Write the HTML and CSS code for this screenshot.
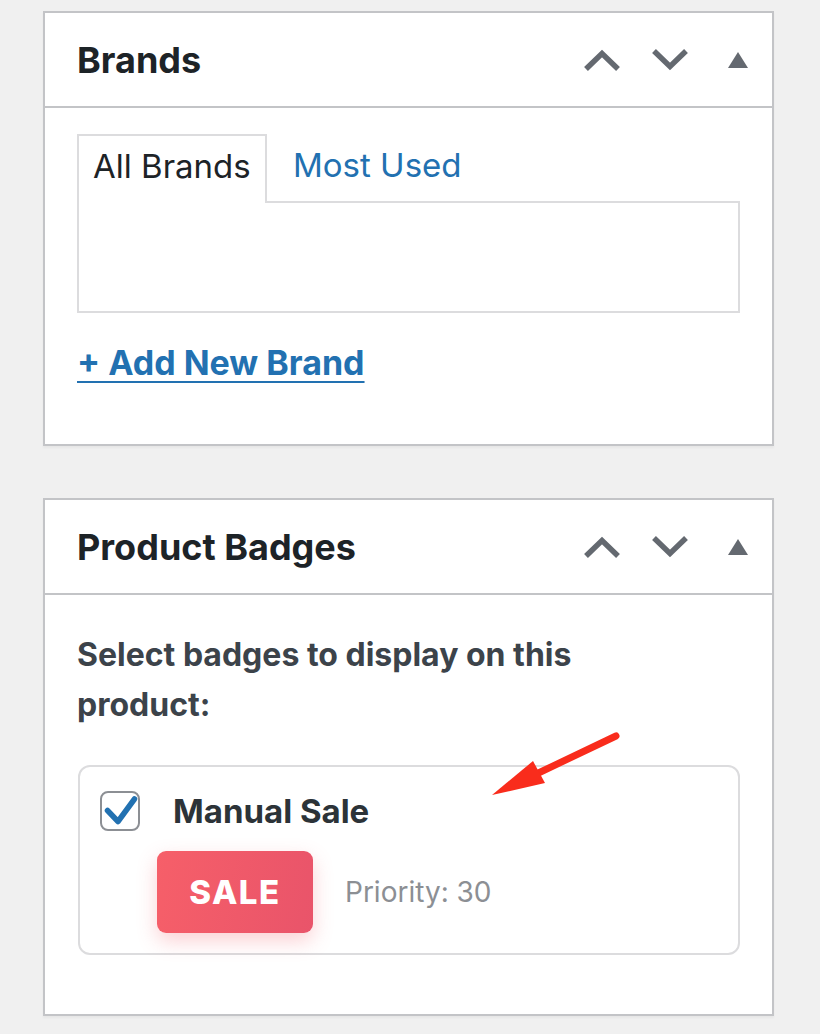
FILE: index.html
```html
<!DOCTYPE html>
<html lang="en">
<head>
<meta charset="utf-8">
<title>Product sidebar</title>
<link rel="stylesheet" href="styles.css">
</head>
<body>
<div class="page">
  <section class="postbox">
    <div class="postbox-header">
      <h2 class="postbox-title">Brands</h2>
      <div class="handle-actions">
        <span class="handle-btn"><svg width="36" height="22" viewBox="0 0 36 22"><polyline points="2,20 18,4.5 34,20" class="chev"/></svg></span>
        <span class="handle-btn"><svg width="36" height="22" viewBox="0 0 36 22"><polyline points="2,2 18,17.5 34,2" class="chev"/></svg></span>
        <span class="handle-btn"><svg width="20" height="16" viewBox="0 0 20 16"><polygon points="10,0 20,16 0,16" class="tri"/></svg></span>
      </div>
    </div>
    <div class="inside brands-inside">
      <ul class="tabs">
        <li class="tab active">All Brands</li>
        <li class="tab"><a class="tab-link" href="#">Most Used</a></li>
      </ul>
      <div class="tabs-panel"></div>
      <a class="add-new" href="#">+ Add New Brand</a>
    </div>
  </section>

  <section class="postbox">
    <div class="postbox-header">
      <h2 class="postbox-title">Product Badges</h2>
      <div class="handle-actions">
        <span class="handle-btn"><svg width="36" height="22" viewBox="0 0 36 22"><polyline points="2,20 18,4.5 34,20" class="chev"/></svg></span>
        <span class="handle-btn"><svg width="36" height="22" viewBox="0 0 36 22"><polyline points="2,2 18,17.5 34,2" class="chev"/></svg></span>
        <span class="handle-btn"><svg width="20" height="16" viewBox="0 0 20 16"><polygon points="10,0 20,16 0,16" class="tri"/></svg></span>
      </div>
    </div>
    <div class="inside badges-inside">
      <p class="badges-intro">Select badges to display on this product:</p>
      <div class="badge-card">
        <label class="badge-row">
          <span class="checkbox"><svg width="40" height="40" viewBox="0 0 40 40"><polyline points="7.5,19.5 18,30.5 34.5,8" class="check"/></svg></span>
          <span class="badge-name">Manual Sale</span>
        </label>
        <div class="badge-meta">
          <span class="sale-badge">SALE</span>
          <span class="priority">Priority: 30</span>
        </div>
      </div>
    </div>
  </section>
</div>
<svg class="annotation" width="820" height="1034" viewBox="0 0 820 1034">
  <line x1="616" y1="736" x2="530" y2="777" class="arrow-line"/>
  <polygon points="492,795 533,761 545,783" class="arrow-head"/>
</svg>
</body>
</html>
```
FILE: styles.css
```css
html, body {
  margin: 0;
  padding: 0;
}
body {
  background: #f0f0f0;
  font-family: Inter, "Liberation Sans", sans-serif;
  color: #3c434a;
  width: 820px;
  height: 1034px;
  overflow: hidden;
  position: relative;
}
.page {
  padding: 11px 0 0 43px;
  display: flex;
  flex-direction: column;
  gap: 52px;
}
.postbox {
  width: 731px;
  box-sizing: border-box;
  background: #fff;
  border: 2px solid #c3c4c7;
  box-shadow: 0 2px 2px rgba(0, 0, 0, 0.04);
}
.postbox-header {
  height: 93px;
  border-bottom: 2px solid #c3c4c7;
  display: flex;
  align-items: center;
  justify-content: space-between;
}
.postbox-title {
  margin: 0;
  padding-left: 32px;
  font-size: 36px;
  font-weight: 700;
  color: #1d2327;
  line-height: 1;
}
.handle-actions {
  display: flex;
  height: 100%;
}
.handle-btn {
  width: 68px;
  display: flex;
  align-items: center;
  justify-content: center;
}
.chev {
  fill: none;
  stroke: #646970;
  stroke-width: 5.5;
  stroke-linejoin: miter;
  stroke-linecap: butt;
}
.tri {
  fill: #646970;
}
.inside {
  padding: 26px 32px 0 32px;
}
.brands-inside {
  padding-bottom: 62px;
}
.tabs {
  list-style: none;
  margin: 0;
  padding: 0;
  display: flex;
  align-items: flex-end;
  gap: 26px;
  position: relative;
  z-index: 1;
}
.tab {
  height: 67px;
  box-sizing: border-box;
  display: flex;
  align-items: center;
  font-size: 33px;
  color: #1d2327;
  padding-bottom: 6px;
  white-space: nowrap;
}
.tab.active {
  border: 2px solid #dcdcde;
  border-bottom: 0;
  background: #fff;
  padding-left: 14px;
  padding-right: 14px;
  width: 190px;
  margin-bottom: -2px;
  height: 69px;
  padding-bottom: 8px;
}
.tab-link {
  color: #2271b1;
  text-decoration: none;
}
.tabs-panel {
  height: 112px;
  box-sizing: border-box;
  border: 2px solid #dcdcde;
}
.add-new {
  display: inline-block;
  margin-top: 31px;
  font-size: 34px;
  font-weight: 700;
  line-height: 38px;
  color: #2271b1;
  text-decoration: underline;
  text-decoration-thickness: 2px;
  text-underline-offset: 6px;
}
.badges-inside {
  padding-bottom: 59px;
}
.badges-intro {
  margin: 0;
  max-width: 560px;
  font-size: 32px;
  font-weight: 700;
  line-height: 50px;
  color: #3c434a;
  padding-top: 9px;
}
.badge-card {
  margin-top: 35px;
  margin-left: 1px;
  border: 2px solid #dcdcde;
  border-radius: 12px;
  padding: 24px 20px 20px 20px;
}
.badge-row {
  display: flex;
  align-items: center;
  gap: 33px;
}
.checkbox {
  width: 40px;
  height: 40px;
  box-sizing: border-box;
  border: 2px solid #8c8f94;
  border-radius: 8px;
  position: relative;
  display: block;
}
.checkbox svg {
  position: absolute;
  left: -2px;
  top: -2px;
}
.check {
  fill: none;
  stroke: #2271b1;
  stroke-width: 5.5;
  stroke-linecap: round;
  stroke-linejoin: round;
}
.badge-name {
  font-size: 33px;
  font-weight: 700;
  color: #2c3338;
}
.badge-meta {
  margin-top: 20px;
  margin-left: 57px;
  display: flex;
  align-items: center;
  gap: 32px;
}
.sale-badge {
  width: 156px;
  height: 82px;
  border-radius: 9px;
  display: flex;
  align-items: center;
  justify-content: center;
  background: linear-gradient(100deg, #f65f69 0%, #e9546a 100%);
  box-shadow: 0 8px 20px rgba(240, 90, 100, 0.28);
  color: #fff;
  font-size: 33px;
  font-weight: 800;
  letter-spacing: 1.5px;
}
.priority {
  font-size: 28px;
  color: #8c8f94;
}
.annotation {
  position: absolute;
  left: 0;
  top: 0;
  pointer-events: none;
}
.arrow-line {
  stroke: #f92c1c;
  stroke-width: 7;
  stroke-linecap: round;
}
.arrow-head {
  fill: #f92c1c;
}
```
